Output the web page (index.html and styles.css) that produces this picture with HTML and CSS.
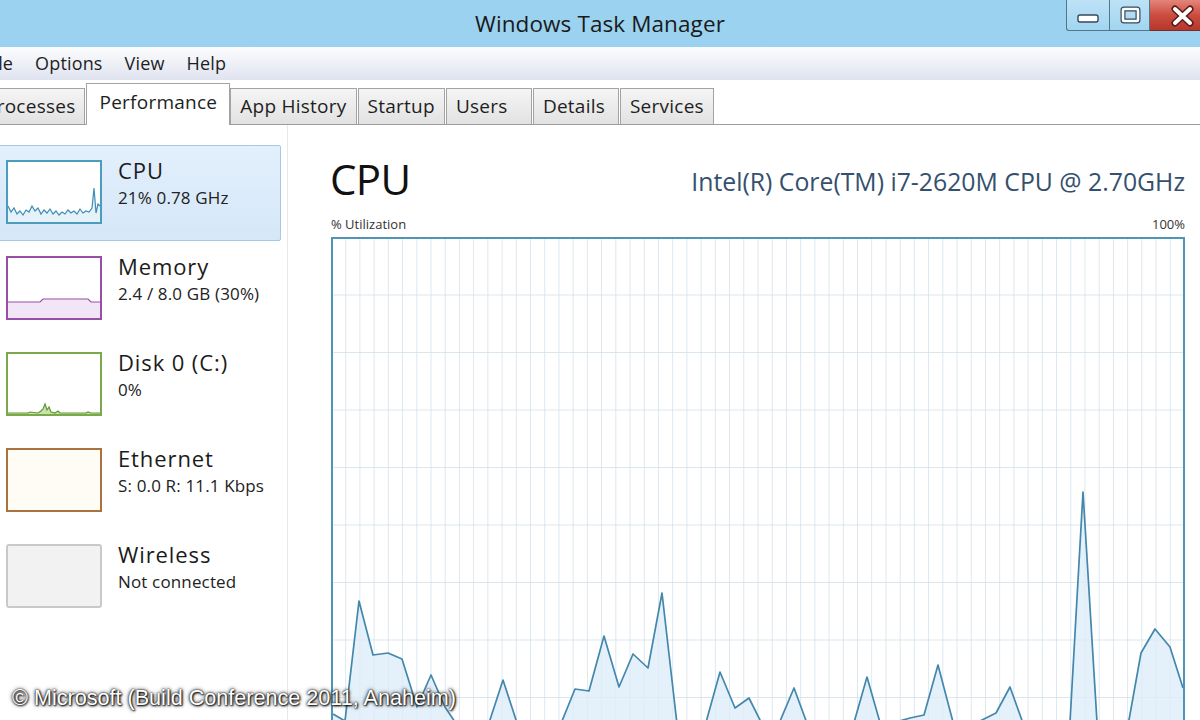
FILE: index.html
```html
<!DOCTYPE html>
<html>
<head>
<meta charset="utf-8">
<title>Windows Task Manager</title>
<link rel="stylesheet" href="styles.css">
</head>
<body>
<div class="window">
  <header class="titlebar">
    <div class="tb-left"></div>
    <div class="title">Windows Task Manager</div>
    <div class="controls">
      <div class="ctl min"><svg width="42" height="30" viewBox="0 0 42 30"><rect x="11" y="15" width="20" height="7" rx="2" fill="#fff" stroke="#34495b" stroke-width="1.4"/></svg></div>
      <div class="ctl max"><svg width="40" height="30" viewBox="0 0 40 30"><rect x="13" y="9" width="15" height="12" rx="1" fill="none" stroke="#34495b" stroke-width="5"/><rect x="13" y="9" width="15" height="12" rx="1" fill="none" stroke="#fff" stroke-width="2.6"/></svg></div>
      <div class="ctl close"><svg width="50" height="30" viewBox="0 0 50 30"><path d="M25 9 L40 23 M40 9 L25 23" stroke="#5b1a14" stroke-width="7" stroke-linecap="round"/><path d="M25 9 L40 23 M40 9 L25 23" stroke="#fff" stroke-width="4" stroke-linecap="round"/></svg></div>
    </div>
  </header>

  <nav class="menubar">
    <span class="menu first">File</span>
    <span class="menu">Options</span>
    <span class="menu">View</span>
    <span class="menu">Help</span>
  </nav>

  <div class="tabs">
    <div class="tab first">Processes</div>
    <div class="tab active">Performance</div>
    <div class="tab">App History</div>
    <div class="tab">Startup</div>
    <div class="tab">Users</div>
    <div class="tab">Details</div>
    <div class="tab">Services</div>
  </div>

  <div class="content">
    <aside class="sidebar">
      <div class="item selected">
        <div class="thumb cpu">
          <svg viewBox="0 0 92 60" preserveAspectRatio="none">
            <polygon fill="#e6f2fa" points="0,44 3,50 6,46 9,52 12,49 15,53 18,48 21,50 24,44 27,49 30,46 33,52 36,48 39,51 42,47 45,52 48,49 51,53 54,50 57,52 60,48 63,51 66,49 69,52 72,47 75,51 78,49 81,50 84,46 86,26 88,51 90,42 92,44 92,60 0,60"/>
            <polyline fill="none" stroke="#3f8db3" stroke-width="1.2" points="0,44 3,50 6,46 9,52 12,49 15,53 18,48 21,50 24,44 27,49 30,46 33,52 36,48 39,51 42,47 45,52 48,49 51,53 54,50 57,52 60,48 63,51 66,49 69,52 72,47 75,51 78,49 81,50 84,46 86,26 88,51 90,42 92,44"/>
          </svg>
        </div>
        <div class="info">
          <div class="name">CPU</div>
          <div class="stat">21% 0.78 GHz</div>
        </div>
      </div>

      <div class="item">
        <div class="thumb mem">
          <svg viewBox="0 0 92 60" preserveAspectRatio="none">
            <polygon fill="#f2e6f6" points="0,44 32,44 35,41 80,41 83,44 92,44 92,60 0,60"/>
            <polyline fill="none" stroke="#9550a6" stroke-width="1.2" points="0,44 32,44 35,41 80,41 83,44 92,44"/>
          </svg>
        </div>
        <div class="info">
          <div class="name">Memory</div>
          <div class="stat">2.4 / 8.0 GB (30%)</div>
        </div>
      </div>

      <div class="item">
        <div class="thumb disk">
          <svg viewBox="0 0 92 60" preserveAspectRatio="none">
            <polygon fill="#c9e2b0" points="0,59 20,59 22,58 30,59 33,57 35,55 37,50 39,56 41,53 43,58 47,59 50,57 52,59 78,59 80,58 83,59 92,59 92,60 0,60"/>
            <polyline fill="none" stroke="#5f9a2f" stroke-width="1.2" points="0,59 20,59 22,58 30,59 33,57 35,55 37,50 39,56 41,53 43,58 47,59 50,57 52,59 78,59 80,58 83,59 92,59"/>
          </svg>
        </div>
        <div class="info">
          <div class="name">Disk 0 (C:)</div>
          <div class="stat">0%</div>
        </div>
      </div>

      <div class="item">
        <div class="thumb eth"></div>
        <div class="info">
          <div class="name">Ethernet</div>
          <div class="stat">S: 0.0 R: 11.1 Kbps</div>
        </div>
      </div>

      <div class="item">
        <div class="thumb wifi"></div>
        <div class="info">
          <div class="name">Wireless</div>
          <div class="stat">Not connected</div>
        </div>
      </div>
    </aside>

    <main class="main">
      <div class="head">
        <div class="big">CPU</div>
        <div class="model">Intel(R) Core(TM) i7-2620M CPU @ 2.70GHz</div>
      </div>
      <div class="labels">
        <span>% Utilization</span>
        <span>100%</span>
      </div>
      <div class="graph">
        <svg width="854" height="600" viewBox="331 237 854 600">
          <defs>
            <pattern id="grid" x="331" y="237" width="14.217" height="57.5" patternUnits="userSpaceOnUse">
              <path d="M0 0 V57.5 M0 0 H14.217" fill="none" stroke="#d0dfe8" stroke-width="1.4"/>
            </pattern>
          </defs>
          <rect x="331" y="237" width="854" height="600" fill="url(#grid)"/>
          <polygon fill="#dcecf8" fill-opacity="0.75" points="333,714 345,721 359,601 373,655 388,653 402,659 417,707 431,675 445,707 459,728 473,735 488,726 503,680 518,726 532,735 546,735 560,726 575,689 589,691 604,636 619,687 633,654 648,668 662,593 677,724 691,735 705,726 720,672 735,708 749,698 763,726 778,726 794,688 808,726 822,735 838,735 853,726 867,677 881,726 896,722 910,718 924,715 938,665 953,722 967,726 982,720 996,713 1010,687 1024,726 1040,735 1055,735 1070,722 1083,492 1097,722 1112,730 1129,720 1141,653 1155,629 1170,647 1183,688 1183,840 333,840"/>
          <polyline fill="none" stroke="#4387ad" stroke-width="1.7" stroke-linejoin="round" points="333,714 345,721 359,601 373,655 388,653 402,659 417,707 431,675 445,707 459,728 473,735 488,726 503,680 518,726 532,735 546,735 560,726 575,689 589,691 604,636 619,687 633,654 648,668 662,593 677,724 691,735 705,726 720,672 735,708 749,698 763,726 778,726 794,688 808,726 822,735 838,735 853,726 867,677 881,726 896,722 910,718 924,715 938,665 953,722 967,726 982,720 996,713 1010,687 1024,726 1040,735 1055,735 1070,722 1083,492 1097,722 1112,730 1129,720 1141,653 1155,629 1170,647 1183,688"/>
          <rect x="332" y="238" width="852" height="620" fill="none" stroke="#4f96b6" stroke-width="2"/>
        </svg>
      </div>
    </main>
  </div>
</div>
<div class="credit">© Microsoft (Build Conference 2011, Anaheim)</div>
</body>
</html>
```

FILE: styles.css
```css
html, body {
  margin: 0;
  padding: 0;
}

body {
  width: 1200px;
  height: 720px;
  overflow: hidden;
  position: relative;
  background: #ffffff;
  font-family: "Open Sans", "Noto Sans", sans-serif;
  color: #1b1b1b;
}

.window {
  width: 1200px;
  height: 720px;
  display: flex;
  flex-direction: column;
}

/* Title bar */
.titlebar {
  height: 47px;
  flex: none;
  background: #9ad2f0;
  display: grid;
  grid-template-columns: 1fr auto 1fr;
}

.title {
  font-size: 22.5px;
  line-height: 47px;
  letter-spacing: 0.1px;
  color: #1a1a1a;
}

.controls {
  justify-self: end;
  align-self: start;
  display: flex;
}

.ctl {
  height: 31px;
  box-sizing: border-box;
  border: 1px solid #56758b;
  border-top: none;
}

.ctl svg {
  display: block;
}

.ctl.min {
  width: 43px;
  border-right: none;
  border-bottom-left-radius: 3px;
  background: linear-gradient(#bde2f6, #a2d5f1);
}

.ctl.max {
  width: 41px;
  background: linear-gradient(#bde2f6, #a2d5f1);
}

.ctl.close {
  width: 50px;
  border-color: #7a2a22;
  border-left: none;
  border-right: none;
  background: linear-gradient(#e3857a, #cc4d40 50%, #b5372c);
}

/* Menu bar */
.menubar {
  height: 33px;
  flex: none;
  display: flex;
  gap: 22px;
  background: linear-gradient(#fdfdfe, #dfe3ef);
  font-size: 18px;
  line-height: 33px;
  letter-spacing: 0.15px;
  color: #1e1e1e;
}

.menu.first {
  margin-left: -16px;
}

/* Tabs */
.tabs {
  height: 44px;
  flex: none;
  display: flex;
  align-items: flex-end;
  gap: 1px;
  border-bottom: 1px solid #9d9d9d;
  background: #ffffff;
}

.tab {
  height: 36px;
  box-sizing: border-box;
  min-width: 86px;
  padding: 0 9px;
  border: 1px solid #a3a3a3;
  border-bottom: none;
  background: linear-gradient(#f5f5f5, #e2e2e2);
  font-size: 19px;
  line-height: 35px;
  letter-spacing: 0.25px;
  color: #1e1e1e;
  white-space: nowrap;
}

.tab.first {
  margin-left: -25px;
}

.tab.active {
  height: 42px;
  margin: 0 -1px -1px 0;
  padding: 1px 12px 0;
  background: #ffffff;
}

/* Content */
.content {
  flex: 1;
  display: flex;
  min-height: 0;
}

.sidebar {
  width: 288px;
  flex: none;
  box-sizing: border-box;
  border-right: 1px solid #e8e8e8;
  padding-top: 20px;
}

.item {
  width: 283px;
  height: 96px;
  box-sizing: border-box;
  margin-left: -2px;
  border: 1px solid transparent;
  padding: 11px 0 0 7px;
  display: flex;
  align-items: flex-start;
  gap: 16px;
}

.item.selected {
  background: linear-gradient(#e3effc, #d5e7f8);
  border-color: #a8c7e4;
  border-radius: 2px;
}

.thumb {
  width: 96px;
  height: 64px;
  flex: none;
  box-sizing: border-box;
  margin-top: 3px;
  border: 2px solid #999;
  background: #ffffff;
}

.thumb svg {
  display: block;
  width: 92px;
  height: 60px;
}

.thumb.cpu { border-color: #4c9cbd; }
.thumb.mem { border-color: #9650a8; }
.thumb.disk { border-color: #7aa94c; }
.thumb.eth { border-color: #a8733e; background: #fffcf6; }
.thumb.wifi {
  border-color: #c9c9c9;
  background: #f2f2f2;
  border-radius: 3px;
}

.name {
  font-size: 22px;
  line-height: 26px;
  letter-spacing: 0.9px;
  color: #1b1b1b;
  white-space: nowrap;
}

.stat {
  font-size: 17px;
  line-height: 20px;
  margin-top: 5px;
  letter-spacing: 0.15px;
  color: #222222;
  white-space: nowrap;
}

/* Main panel */
.main {
  flex: 1;
  min-width: 0;
  padding: 30px 15px 0 43px;
}

.head {
  display: flex;
  justify-content: space-between;
  align-items: flex-start;
}

.big {
  font-size: 42px;
  line-height: 48px;
  letter-spacing: -0.6px;
  margin-left: -1px;
  color: #111111;
}

.model {
  font-size: 24.8px;
  line-height: 28px;
  margin-top: 12px;
  color: #34506e;
  white-space: nowrap;
}

.labels {
  display: flex;
  justify-content: space-between;
  font-size: 13px;
  line-height: 16px;
  margin: 13px 0 5px;
  color: #333333;
}

.graph {
  height: 600px;
}

.graph svg {
  display: block;
}

/* Watermark */
.credit {
  position: absolute;
  left: 12px;
  top: 685px;
  font-family: "Liberation Sans", Arial, sans-serif;
  font-size: 21.6px;
  line-height: 26px;
  color: #ffffff;
  text-shadow: 0 0 2px #000, 0 0 4px #222, 1px 1px 2px #000;
  white-space: nowrap;
}
```
